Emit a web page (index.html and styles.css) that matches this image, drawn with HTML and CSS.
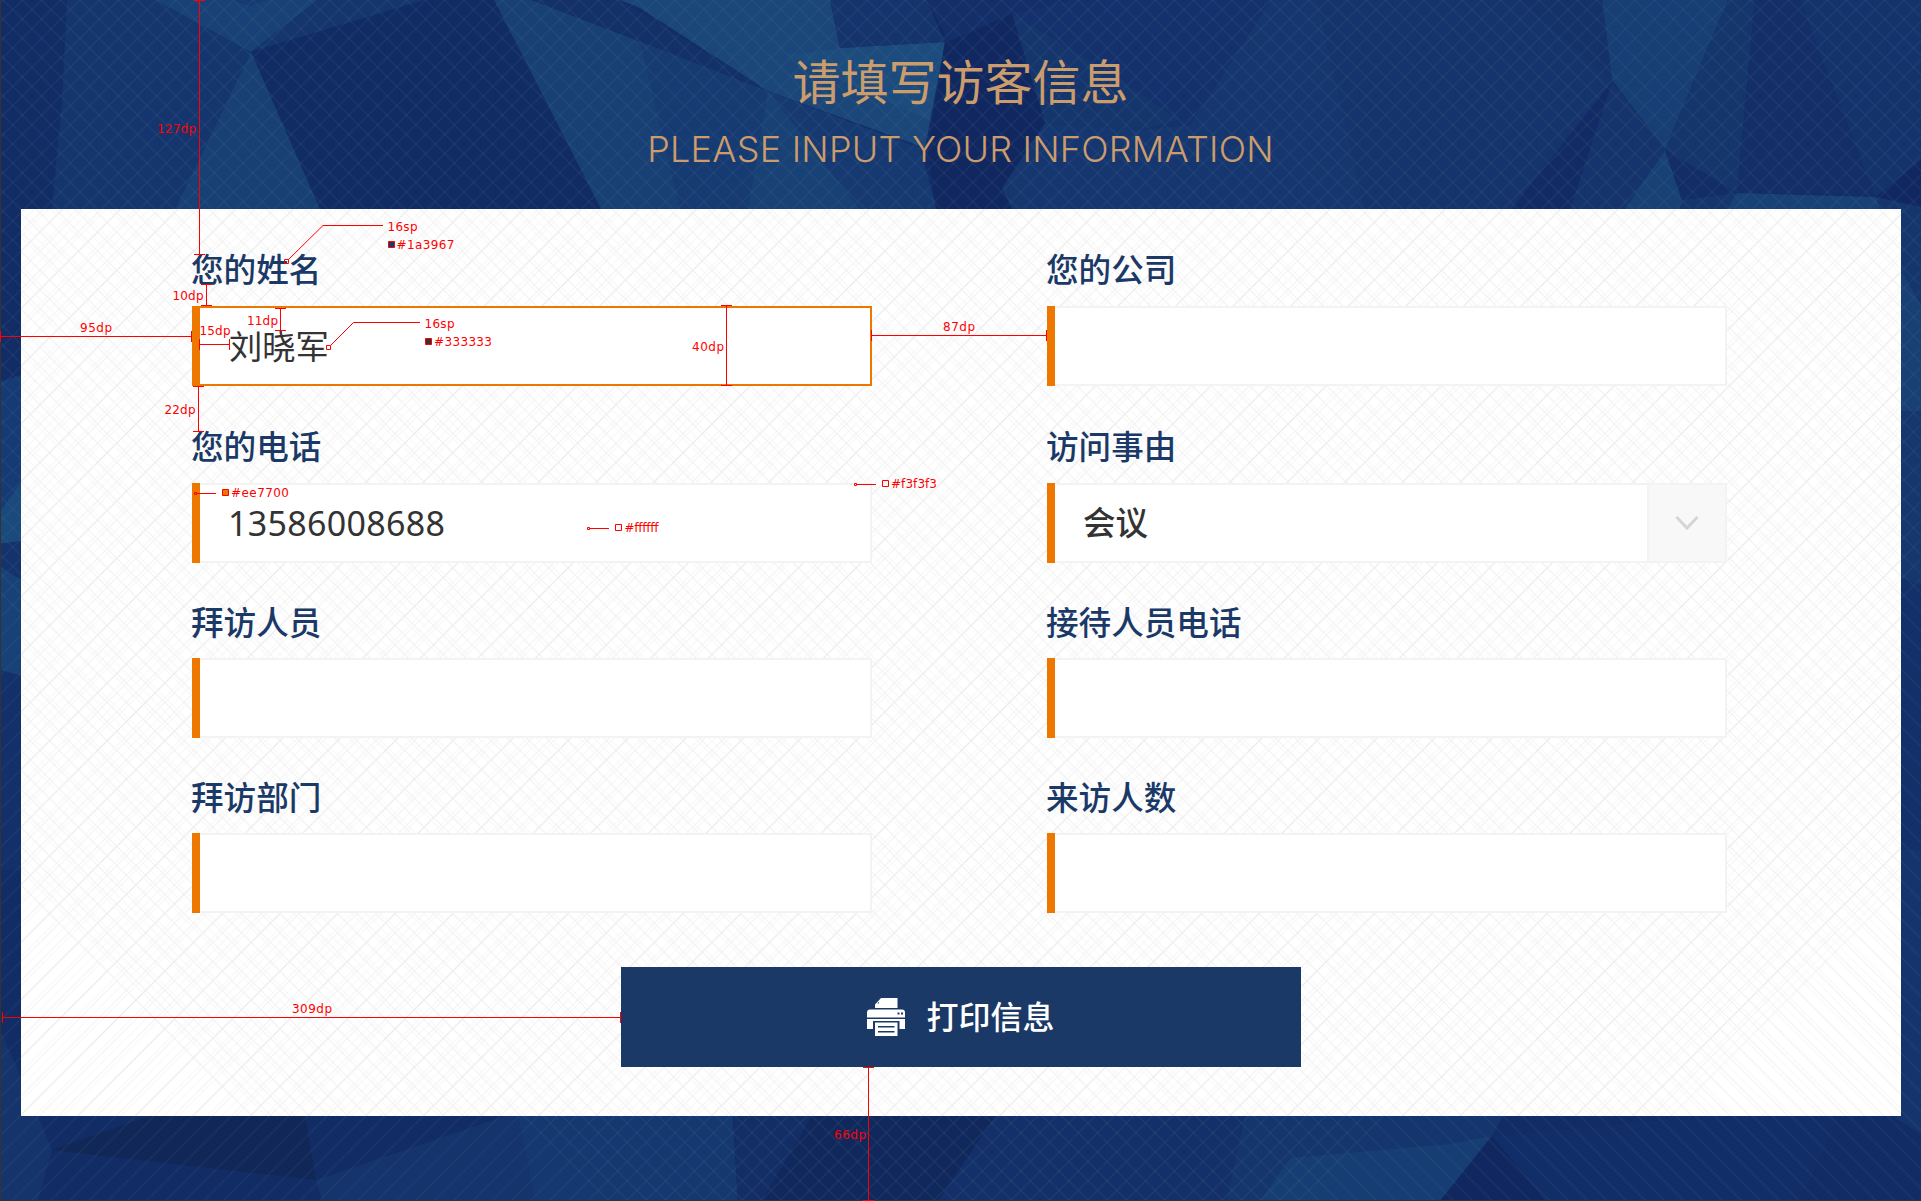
FILE: index.html
```html
<!DOCTYPE html>
<html lang="zh-CN">
<head>
<meta charset="utf-8">
<title>请填写访客信息</title>
<link rel="stylesheet" href="styles.css">
</head>
<body>
<div class="screen">
  <svg class="backdrop" viewBox="0 0 1921 1201" aria-hidden="true">
    <defs>
      <pattern id="rise" width="19.2" height="19.2" patternUnits="userSpaceOnUse" patternTransform="translate(3.2 0)">
        <path d="M-2 2L2 -2M-2 21.2L21.2 -2M17.2 21.2L21.2 17.2" stroke="#4a7088" stroke-opacity=".21" fill="none"/>
      </pattern>
      <pattern id="fall" width="19.2" height="19.2" patternUnits="userSpaceOnUse" patternTransform="translate(3.2 0)">
        <path d="M-2 -2L21.2 21.2M17.2 -2L21.2 2M-2 17.2L2 21.2" stroke="#4a7088" stroke-opacity=".21" fill="none"/>
      </pattern>
    </defs>
    <rect width="1921" height="1201" fill="#122c66"/>
    <path fill="#15356e" d="M67 0H155L251 52 175 209H52L62 100z"/>
    <path fill="#184177" d="M155 0H318L251 52z"/>
    <path fill="#163a73" d="M230 0L250 6 268 0z"/>
    <path fill="#15356e" d="M318 0H425L251 52z"/>
    <path fill="#112b65" d="M251 52L425 0H494L601 209H320z"/>
    <path fill="#184075" d="M251 52L320 209H175z"/>
    <path fill="#184075" d="M494 0H532L768 91 750 209H601z"/>
    <path fill="#163a72" d="M640 41L768 91 750 209H680z"/>
    <path fill="#133069" d="M532 0H620L770 92 640 41z"/>
    <path fill="#1a467a" d="M620 0H830L840 48 945 42 925 148 768 91 640 8z"/>
    <path fill="#1c4b7d" d="M840 48L945 42 930 120 905 110 786 55z"/>
    <path fill="#15346e" d="M830 0H927L945 42 840 48z"/>
    <path fill="#163971" d="M768 91L920 148 937 209H860z"/>
    <path fill="#184176" d="M768 91L860 209H748z"/>
    <path fill="#112760" d="M927 0H1000L1012 14 1045 123 1002 188 1012 209H936L928 150 945 42z"/>
    <path fill="#132e69" d="M927 0H1070L1012 14 948 42z"/>
    <path fill="#14316d" d="M1012 14L1070 0H1271L1190 125 1140 130 1090 60z"/>
    <path fill="#15356d" d="M1012 14L1090 60 1180 120 1140 130 1045 123z"/>
    <path fill="#163670" d="M1045 123L1140 130 1190 125 1271 0H1320L1365 209H1012L1002 188z"/>
    <path fill="#15346d" d="M1317 0H1600L1612 82 1512 209H1365z"/>
    <path fill="#143169" d="M1520 0H1602L1612 80z"/>
    <path fill="#173e75" d="M1602 0H1728L1665 150 1612 80z"/>
    <path fill="#15356d" d="M1728 0H1755L1737 193 1665 150z"/>
    <path fill="#132e69" d="M1755 0H1800L1825 70 1876 195 1737 193z"/>
    <path fill="#14336d" d="M1800 0H1921V160L1876 197 1822 60z"/>
    <path fill="#122b66" d="M1612 82L1570 209H1512z"/>
    <path fill="#15346d" d="M1612 82L1665 150 1625 209H1570z"/>
    <path fill="#184176" d="M1665 150L1682 200 1680 209H1625z"/>
    <path fill="#122d67" d="M1665 150L1737 193 1682 200z"/>
    <path fill="#15356d" d="M1682 200L1737 193 1727 209H1680z"/>
    <path fill="#184277" d="M1737 193L1876 197 1880 209H1727z"/>
    <path fill="#112762" d="M1921 160V207L1876 197z"/>
    <path fill="#15356e" d="M1876 197L1921 207V305L1901 270z"/>
    <path fill="#184075" d="M1901 270L1921 305V411H1901z"/>
    <path fill="#15366e" d="M1901 411H1921V585L1901 578z"/>
    <path fill="#13306a" d="M1901 578L1921 585V850H1901z"/>
    <path fill="#15346e" d="M1901 850H1921V1134L1895 1118z"/>
    <path fill="#163a74" d="M0 382L21 375V482L0 511z"/>
    <path fill="#1a497c" d="M0 511L21 482V541L0 544z"/>
    <path fill="#14336c" d="M0 544L21 541V580L0 566z"/>
    <path fill="#184277" d="M0 566L21 580V676L0 670z"/>
    <path fill="#13306a" d="M0 670L21 676V870H0z"/>
    <path fill="#15346c" d="M0 1030L40 1120 52 1150 38 1201H0z"/>
    <path fill="#112757" d="M52 1150L150 1116H305L316 1180z"/>
    <path fill="#15336c" d="M316 1180L505 1116H518L535 1201H322z"/>
    <path fill="#163871" d="M518 1116H733L738 1201H535z"/>
    <path fill="#11285d" d="M733 1116H995L938 1201H738z"/>
    <path fill="#132e67" d="M733 1116H812L762 1201H738z"/>
    <path fill="#14306a" d="M995 1116H1245L1226 1201H938z"/>
    <path fill="#15356e" d="M1245 1116H1503L1492 1136 1440 1201H1226z"/>
    <path fill="#173e74" d="M1290 1158L1450 1144 1492 1136 1440 1201H1260z"/>
    <path fill="#11275f" d="M1492 1136L1545 1201H1440z"/>
    <path fill="#122e69" d="M1492 1136L1700 1116H1840L1800 1201H1545z"/>
    <path fill="url(#rise)" d="M0 0H1921V590L1310 1201H0z"/>
    <path fill="url(#fall)" d="M0 0H1921V1201H600L0 600z"/>
    <path stroke="#333" fill="none" d="M.5 0V1200.5H1921"/>
  </svg>

  <header class="heading">
    <h1 class="heading-cn">请填写访客信息</h1>
    <p class="heading-en">PLEASE INPUT YOUR INFORMATION</p>
  </header>

  <main class="panel">
    <svg class="panel-texture" viewBox="21 209 1880 907" aria-hidden="true">
      <defs>
        <pattern id="panel-rise" width="57.6" height="57.6" patternUnits="userSpaceOnUse" patternTransform="translate(41.6 0)">
          <path stroke="#e6e6e6" fill="none" d="M-2 59.6L59.6 -2M-2 2L2 -2M55.6 59.6L59.6 55.6"/>
          <path stroke="#f1f1f1" fill="none" d="M0 19.2L19.2 0M0 38.4L38.4 0M19.2 57.6L57.6 19.2M38.4 57.6L57.6 38.4"/>
          <path stroke="#f6f6f6" fill="none" d="M0 14.4L14.4 0M0 28.8L28.8 0M0 43.2L43.2 0M14.4 57.6L57.6 14.4M28.8 57.6L57.6 28.8M43.2 57.6L57.6 43.2"/>
        </pattern>
        <pattern id="panel-fall" width="57.6" height="57.6" patternUnits="userSpaceOnUse">
          <path stroke="#f0f0f0" fill="none" d="M-2 -2L59.6 59.6M0 19.2L38.4 57.6M0 38.4L19.2 57.6M19.2 0L57.6 38.4M38.4 0L57.6 19.2"/>
          <path stroke="#f6f6f6" fill="none" d="M0 14.4L43.2 57.6M0 28.8L28.8 57.6M0 43.2L14.4 57.6M14.4 0L57.6 43.2M28.8 0L57.6 28.8M43.2 0L57.6 14.4"/>
        </pattern>
      </defs>
      <path fill="url(#panel-rise)" d="M21 209H1901V890L1675 1116H21z"/>
      <path fill="url(#panel-fall)" d="M21 209H1901V1116H246L21 891z"/>
    </svg>

    <form class="form">
      <div class="fields">
        <div class="field"><span class="label">您的姓名</span><div class="box box-active"><span class="value value-name">刘晓军</span></div></div>
        <div class="field"><span class="label">您的公司</span><div class="box"></div></div>
        <div class="field"><span class="label">您的电话</span><div class="box"><span class="value value-phone">13586008688</span></div></div>
        <div class="field"><span class="label">访问事由</span><div class="box"><span class="value value-reason">会议</span>
          <span class="toggle"><svg width="24" height="16" viewBox="0 0 24 16"><path d="M1.5 2L12 13 22.5 2" fill="none" stroke="#d5d5d5" stroke-width="3"/></svg></span></div></div>
        <div class="field"><span class="label">拜访人员</span><div class="box"></div></div>
        <div class="field"><span class="label">接待人员电话</span><div class="box"></div></div>
        <div class="field"><span class="label">拜访部门</span><div class="box"></div></div>
        <div class="field"><span class="label">来访人数</span><div class="box"></div></div>
      </div>
      <button class="print" type="button">
        <svg class="print-icon" width="38" height="38" viewBox="0 0 38 38" fill="#fff">
          <path fill-rule="evenodd" d="M14 0H30.500V10H8V6.500zM12 5.500V3.500L10.500 5.500z"/>
          <path fill-rule="evenodd" d="M3 11.500H35Q38 11.500 38 14.500V19.500H0V14.500Q0 11.500 3 11.500zM30.500 14.500V16.500H32.500V14.500zM34 14.500V16.500H36V14.500z"/>
          <path d="M0 21H38V31H32.500V23H6V31H0z"/>
          <path fill-rule="evenodd" d="M8 24.500H30.500V38H8zM11 28V29.500H27.500V28zM11 33V34.500H27.500V33z"/>
        </svg>
        <span class="print-text">打印信息</span>
      </button>
    </form>
  </main>

  <svg class="notes" viewBox="0 0 1921 1201">
    <g fill="none" stroke="#f00">
      <path d="M199.500 0V254.500M194 .5H205M194 254.500H205"/>
      <path d="M206.500 284.500V305.500M201 284.500H212M201 305.500H212"/>
      <path d="M1 336.500H192M.5 331V342M191.500 331V342"/>
      <path d="M280.500 308.500V330.500M275 308.500H286M275 330.500H286"/>
      <path d="M199.500 344.500H229.500M199.500 339V350M229.500 339V350"/>
      <path d="M198.500 386.500V431.500M193 386.500H204M193 431.500H204"/>
      <path d="M726.500 305.500V385.500M721 305.500H732M721 385.500H732"/>
      <path d="M871.500 335.500H1046.500M871.500 330V341M1046.500 330V341"/>
      <path d="M2.500 1017.500H620.500M2.500 1012V1023M620.500 1012V1023"/>
      <path d="M868.500 1067.500V1200.500M863 1067.500H874M863 1200.500H874"/>
      <path d="M288.500 259.500L323 225.500H383M284.500 259.500h4v4h-4z"/>
      <path d="M330.500 345.500L353.500 322.500H420M326.500 345.500h4v4h-4z"/>
      <path d="M857 484.500H876M854.500 483.500h2v2h-2zM882.500 480.500h6v6h-6z"/>
      <path d="M589 528.500H609M587.500 527.500h2v2h-2zM615.500 524.500h6v6h-6z"/>
      <path d="M197 493.500H216M194.500 492.500h2v2h-2z"/>
      <path fill="#1a3967" d="M388.500 241.500h6v6h-6z"/>
      <path fill="#333" d="M425.500 338.500h6v6h-6z"/>
      <path fill="#e70" d="M222.500 489.500h6v6h-6z"/>
    </g>
    <g class="note-text">
      <text x="157" y="133" textLength="39">127dp</text>
      <text x="387.500" y="231" textLength="30">16sp</text>
      <text x="396.500" y="249" textLength="58">#1a3967</text>
      <text x="172.500" y="300" textLength="31">10dp</text>
      <text x="80" y="332" textLength="32">95dp</text>
      <text x="247" y="325" textLength="31">11dp</text>
      <text x="199.500" y="335" textLength="31">15dp</text>
      <text x="424.500" y="328" textLength="30">16sp</text>
      <text x="434" y="346" textLength="58">#333333</text>
      <text x="164.500" y="414" textLength="31">22dp</text>
      <text x="692" y="351" textLength="32">40dp</text>
      <text x="943" y="331" textLength="32">87dp</text>
      <text x="891" y="488" textLength="46">#f3f3f3</text>
      <text x="624.500" y="532" textLength="34">#ffffff</text>
      <text x="231" y="497" textLength="58">#ee7700</text>
      <text x="292" y="1013" textLength="40">309dp</text>
      <text x="834" y="1139" textLength="32">66dp</text>
    </g>
  </svg>
</div>
</body>
</html>
```

FILE: styles.css
```css
* {
  box-sizing: border-box;
}

body {
  margin: 0;
  font-family: "Noto Sans CJK SC", "Noto Sans", sans-serif;
}

.screen {
  position: relative;
  width: 1921px;
  height: 1201px;
  overflow: hidden;
}

.backdrop,
.notes,
.panel-texture {
  position: absolute;
  inset: 0;
  width: 100%;
  height: 100%;
}

.notes {
  pointer-events: none;
}

.note-text {
  fill: #f00;
  font-family: "DejaVu Sans", sans-serif;
  font-size: 12px;
}

.heading {
  position: relative;
  height: 209px;
  padding-top: 43px;
  text-align: center;
  color: #cb9c6c;
}

.heading-cn {
  margin: 0;
  font-size: 48px;
  line-height: 72px;
  font-weight: 400;
}

.heading-en {
  margin: 12px 0 0;
  font-family: Inter, sans-serif;
  font-size: 36px;
  line-height: 44px;
  font-weight: 300;
  letter-spacing: 0.23px;
}

.panel {
  position: relative;
  width: 1880px;
  height: 907px;
  margin-left: 21px;
  background: #fff;
}

.form {
  position: relative;
  display: flex;
  flex-direction: column;
  align-items: center;
  gap: 54px;
}

.fields {
  display: grid;
  align-self: flex-start;
  grid-template-columns: 680px 680px;
  grid-template-rows: 177px 177px 175px 175px;
  column-gap: 175px;
  align-items: end;
  padding-left: 171px;
}

.field {
  display: flex;
  flex-direction: column;
  gap: 18px;
}

.field:nth-child(n + 5) {
  gap: 17px;
}

.label {
  margin-left: -1px;
  font-size: 32.6px;
  line-height: 40px;
  font-weight: 500;
  color: #1a3967;
}

.box {
  display: flex;
  align-items: center;
  height: 80px;
  background: #fff;
  box-shadow: inset 0 0 0 2px #f3f3f3;
}

.box::before {
  content: "";
  align-self: stretch;
  width: 8px;
  background: #e70;
}

.box-active {
  box-shadow: inset 0 0 0 2px #e70;
}

.value {
  flex: 1;
  font-size: 32.5px;
  line-height: 40px;
  color: #333;
}

.value-name {
  padding: 0 0 3px 29px;
  font-size: 33.3px;
}

.value-phone {
  padding-left: 28px;
  font-family: "Noto Sans", sans-serif;
  font-size: 34px;
  letter-spacing: 0.3px;
}

.value-reason {
  padding: 0 0 4px 28px;
  font-weight: 500;
}

.toggle {
  display: flex;
  align-items: center;
  justify-content: center;
  width: 78px;
  height: 76px;
  margin-right: 2px;
  border-left: 2px solid #f3f3f3;
  background: #f8f8f8;
}

.print {
  display: flex;
  align-items: center;
  justify-content: center;
  gap: 21px;
  width: 680px;
  height: 100px;
  padding: 0;
  border: 0;
  background: #1a3967;
  color: #fff;
}

.print-text {
  padding-bottom: 4px;
  font-family: "Noto Sans CJK SC", sans-serif;
  font-size: 32px;
  line-height: 40px;
  font-weight: 500;
}
```
